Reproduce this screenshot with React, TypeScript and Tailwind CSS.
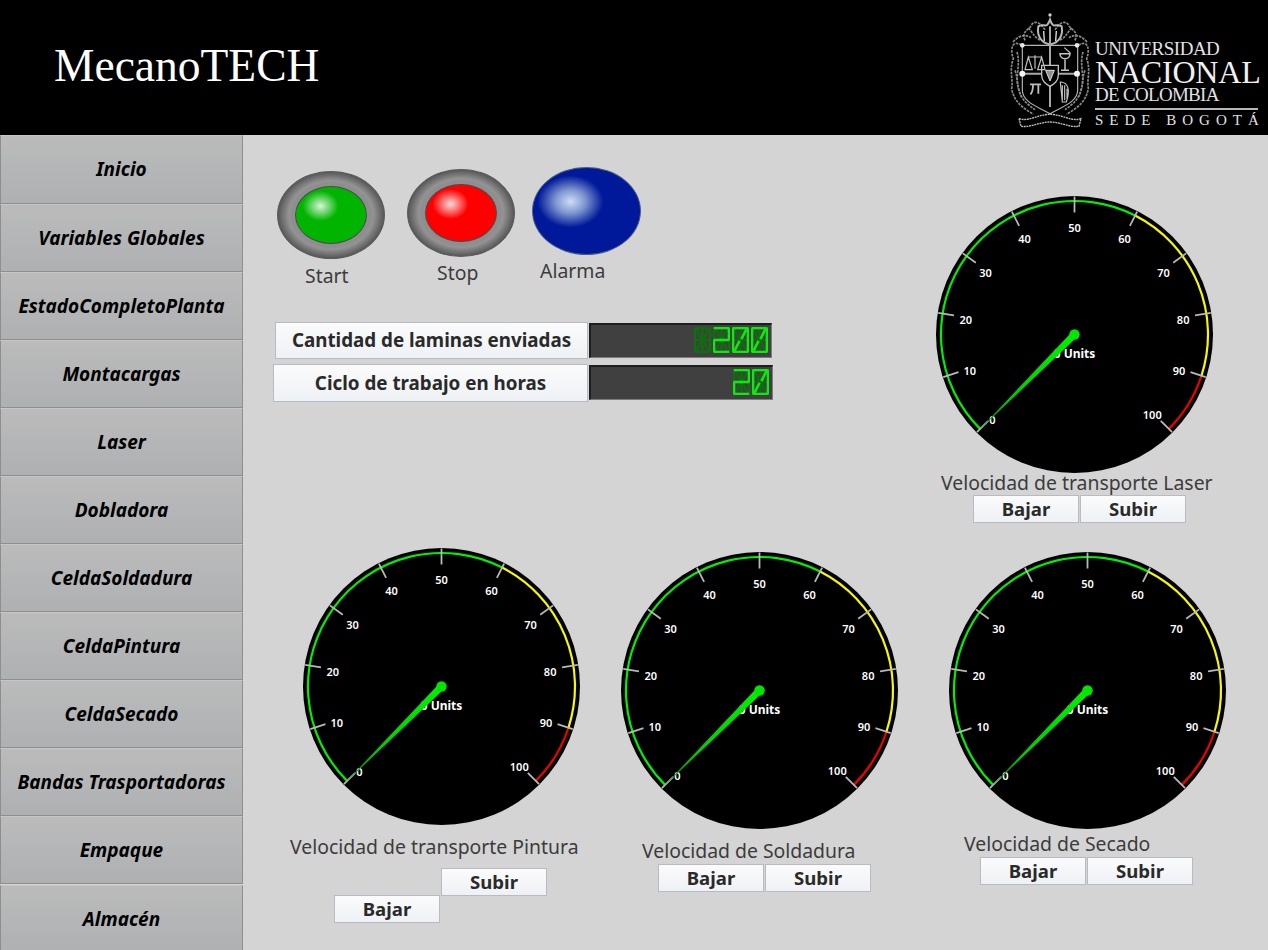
import React from 'react';

const menuItems = [
  'Inicio',
  'Variables Globales',
  'EstadoCompletoPlanta',
  'Montacargas',
  'Laser',
  'Dobladora',
  'CeldaSoldadura',
  'CeldaPintura',
  'CeldaSecado',
  'Bandas Trasportadoras',
  'Empaque',
];

// 14 segment shapes on a 17x26 cell
const segments: Record<string, [number, number, number, number]> = {
  a: [2, 1, 15, 1],
  b: [16, 2, 16, 12],
  c: [16, 14, 16, 24],
  d: [2, 25, 15, 25],
  e: [1, 14, 1, 24],
  f: [1, 2, 1, 12],
  g1: [2, 13, 8, 13],
  g2: [9, 13, 15, 13],
  h: [3, 3, 7, 11],
  i: [8.5, 3, 8.5, 11],
  j: [14, 3, 10, 11],
  k: [7, 15, 3, 23],
  l: [8.5, 15, 8.5, 23],
  m: [10, 15, 14, 23],
};

const digitOn: Record<string, string[]> = {
  '1': [],
  '2': ['a', 'b', 'g1', 'g2', 'e', 'd'],
  '0': ['a', 'b', 'c', 'd', 'e', 'f', 'j', 'k'],
};

function Digit({ char }: { char: string }) {
  const on = digitOn[char];
  const names = Object.keys(segments).sort((p, q) => Number(on.includes(p)) - Number(on.includes(q)));
  return (
    <svg width="17" height="26" viewBox="0 0 17 26" className="shrink-0">
      {names.map(name => {
        const [x1, y1, x2, y2] = segments[name];
        const lit = on.includes(name);
        return (
          <line
            key={name}
            x1={x1}
            y1={y1}
            x2={x2}
            y2={y2}
            stroke={lit ? '#0cec0c' : '#0a720a'}
            strokeWidth={lit ? 2.6 : 2}
            strokeLinecap="square"
          />
        );
      })}
    </svg>
  );
}

function Display({ value, className }: { value: string; className: string }) {
  return (
    <div
      className={`flex justify-end gap-[2px] bg-[#404040] border-t-2 border-l-2 border-r border-b border-t-[#1e1e1e] border-l-[#1e1e1e] border-r-[#7c7c7c] border-b-[#7c7c7c] pt-[2px] pr-[3px] ${className}`}
    >
      {value.split('').map((c, i) => (
        <Digit key={i} char={c} />
      ))}
    </div>
  );
}

function polar(r: number, value: number) {
  const a = ((-135 + 2.7 * value) * Math.PI) / 180;
  return { x: 138.5 + r * Math.sin(a), y: 138.5 - r * Math.cos(a) };
}

function arc(from: number, to: number, r: number) {
  const p1 = polar(r, from);
  const p2 = polar(r, to);
  const large = (to - from) * 2.7 > 180 ? 1 : 0;
  return `M${p1.x} ${p1.y}A${r} ${r} 0 ${large} 1 ${p2.x} ${p2.y}`;
}

function Gauge({ id }: { id: string }) {
  const ticks = [0, 10, 20, 30, 40, 50, 60, 70, 80, 90, 100];
  const tip = polar(136, 0);
  const mid = polar(70, 0);
  const nx = Math.SQRT1_2;
  return (
    <svg width="277" height="277" viewBox="0 0 277 277" className="block shrink-0">
      <defs>
        <linearGradient id={id} x1="138.5" y1="138.5" x2={tip.x} y2={tip.y} gradientUnits="userSpaceOnUse">
          <stop offset="0" stopColor="#00f000" />
          <stop offset="0.6" stopColor="#00d000" />
          <stop offset="1" stopColor="#108a10" />
        </linearGradient>
      </defs>
      <circle cx="138.5" cy="138.5" r="138.5" fill="#000" />
      <path d={arc(0, 60, 133.5)} fill="none" stroke="#00f000" strokeWidth="2.2" />
      <path d={arc(60, 90, 133.5)} fill="none" stroke="#f8f800" strokeWidth="2.2" />
      <path d={arc(90, 100, 133.5)} fill="none" stroke="#f00000" strokeWidth="2.2" />
      {ticks.map(v => {
        const a = polar(138, v);
        const b = polar(122, v);
        const t = polar(v === 0 ? 116 : 110, v);
        return (
          <g key={v}>
            <line x1={a.x} y1={a.y} x2={b.x} y2={b.y} stroke="#b8b8b8" strokeWidth="1.8" />
            <text x={t.x} y={t.y + 7} textAnchor="middle" className="fill-white text-[11px] font-semibold">
              {v}
            </text>
          </g>
        );
      })}
      <text x="138.5" y="162" textAnchor="middle" className="fill-white text-[12px] font-bold">
        0 Units
      </text>
      <polygon
        points={`${138.5 + 3.6 * nx},${138.5 + 3.6 * nx} ${mid.x + 1.9 * nx},${mid.y + 1.9 * nx} ${tip.x},${tip.y} ${mid.x - 1.9 * nx},${mid.y - 1.9 * nx} ${138.5 - 3.6 * nx},${138.5 - 3.6 * nx}`}
        fill={`url(#${id})`}
      />
      <circle cx="138.5" cy="138.5" r="5.2" fill="#00e600" />
    </svg>
  );
}

function ActionButton({ label, className = '' }: { label: string; className?: string }) {
  return (
    <button className={`w-[106px] h-[28px] shrink-0 flex items-center justify-center bg-gradient-to-b from-[#fbfbfb] to-[#eef1f5] border border-[#b8bcc2] text-[18.6px] leading-none font-bold text-[#2a2a2a] ${className}`}>
      {label}
    </button>
  );
}

function Title({ text, className }: { text: string; className: string }) {
  return <div className={`h-[24px] leading-[24px] text-[19.4px] text-[#3c3c3c] whitespace-nowrap ${className}`}>{text}</div>;
}

function Lamp({ label, kind, className, labelClass }: { label: string; kind: 'start' | 'stop' | 'alarm'; className: string; labelClass: string }) {
  return (
    <div className={`w-[108px] flex flex-col items-start ${className}`}>
      {kind === 'alarm' ? (
        <div className="w-[109px] h-[88px] rounded-[50%] border border-[#4a5a80] bg-[radial-gradient(ellipse_33px_26px_at_35%_39%,#cddcf6_0%,#7f97d0_45%,#00189a_100%)]" />
      ) : (
        <div className="w-[108px] h-[88px] rounded-[50%] border border-[#5a5a5a] flex items-center justify-center bg-[radial-gradient(closest-side,#8e8e8e_0%,#8e8e8e_74%,#939393_80%,#585858_100%)]">
          <div
            className={`w-[72px] h-[58px] rounded-[50%] border border-[#4a4a4a] ${
              kind === 'start'
                ? 'bg-[radial-gradient(ellipse_18px_15px_at_35%_34%,#d8f5d8_0%,#00b400_100%)]'
                : 'bg-[radial-gradient(ellipse_18px_15px_at_35%_34%,#ffdcdc_0%,#fe0000_100%)]'
            }`}
          />
        </div>
      )}
      <div className={`h-[24px] leading-[24px] text-[19.4px] text-[#3c3c3c] ${labelClass}`}>{label}</div>
    </div>
  );
}

function Crest() {
  // rough drawing of the university coat of arms
  return (
    <svg width="90" height="125" viewBox="0 0 270 375" className="shrink-0 blur-[0.5px]" fill="none" stroke="#c4c4c4">
      <g strokeWidth="5" stroke="#8a8a8a" strokeDasharray="8 3">
        <path d="M50 115C20 95 15 130 25 155C12 190 25 215 20 245C28 290 60 305 85 322" />
        <path d="M220 115C250 95 255 130 245 155C258 190 245 215 250 245C242 290 210 305 185 322" />
        <path d="M36 135C48 175 28 210 42 250C48 275 66 292 90 308" />
        <path d="M234 135C222 175 242 210 228 250C222 275 204 292 180 308" />
        <path d="M60 100C48 70 72 72 82 50C98 38 110 56 120 68" />
        <path d="M210 100C222 70 198 72 188 50C172 38 160 56 150 68" />
        <path d="M24 105C42 85 60 80 78 92" />
        <path d="M246 105C228 85 210 80 192 92" />
        <path d="M70 62C85 80 90 95 110 100" />
        <path d="M200 62C185 80 180 95 160 100" />
        <path d="M30 190C40 215 34 240 50 270" />
        <path d="M240 190C230 215 236 240 220 270" />
      </g>
      <path d="M100 58C95 85 108 108 135 112C162 108 175 85 170 58C152 46 146 70 135 38C124 70 118 46 100 58Z" strokeWidth="6" stroke="#b8b8b8" />
      <path d="M116 72L118 102M135 58L135 108M154 72L152 102" strokeWidth="4" stroke="#e4e4e4" />
      <circle cx="135" cy="24" r="5" fill="#d0d0d0" stroke="none" />
      <path d="M52 115H218V250C218 285 170 300 135 320C100 300 52 285 52 250Z" strokeWidth="3.5" stroke="#b4b4b4" />
      <path d="M135 60V300M52 200H218" strokeWidth="6" stroke="#a8a8a8" />
      <circle cx="52" cy="115" r="7" fill="#e8e8e8" stroke="none" />
      <circle cx="216" cy="115" r="7" fill="#e8e8e8" stroke="none" />
      <circle cx="52" cy="200" r="9" fill="#f4f4f4" stroke="none" />
      <circle cx="216" cy="200" r="9" fill="#f4f4f4" stroke="none" />
      <path d="M110 175H160V205C160 222 148 230 135 238C122 230 110 222 110 205Z" strokeWidth="4" fill="#000" stroke="#c0c0c0" />
      <path d="M122 190H148L135 222Z" strokeWidth="3" fill="#909090" stroke="#dcdcdc" />
      <path d="M90 145V185M70 150H110M70 150L60 188H82ZM110 150L98 188H120Z" strokeWidth="3.5" />
      <path d="M165 140C165 160 195 160 195 140ZM180 158V188M168 190H192" strokeWidth="4.5" />
      <path d="M178 122L196 138" strokeWidth="3.5" />
      <path d="M75 232H108M84 232C84 250 82 258 76 262M100 232V260" strokeWidth="5.5" stroke="#bcbcbc" />
      <path d="M166 225C190 225 196 250 184 285H172ZM172 235V278M179 235V280M186 245V275" strokeWidth="3.5" />
      <path d="M42 335C70 345 100 322 135 322C170 322 200 345 228 335L222 358C195 362 165 345 135 345C105 345 75 362 48 358Z" strokeWidth="4" strokeDasharray="6 2" stroke="#c0c0c0" />
    </svg>
  );
}

function Logo() {
  return (
    <div className="flex items-start mt-[7px] mr-[8px]">
      <Crest />
      <div className="flex flex-col font-['Liberation_Serif',serif] text-[#e2e2e2] w-[165px] pt-[32px] whitespace-nowrap">
        <div className="text-[19px] leading-[20px] tracking-[-0.5px]">UNIVERSIDAD</div>
        <div className="text-[32px] leading-[27px] tracking-[-0.2px] text-[#f0f0f0]">NACIONAL</div>
        <div className="text-[19px] leading-[18px] tracking-[-0.7px]">DE COLOMBIA</div>
        <div className="h-[2px] w-[163px] bg-[#b8b8b8] mt-[4px]" />
        <div className="text-[15px] leading-[15px] tracking-[6px] mt-[3px]">SEDE BOGOTÁ</div>
      </div>
    </div>
  );
}

export default function App() {
  return (
    <div className="w-[1268px] h-[950px] overflow-hidden flex flex-col bg-[#d4d4d4] font-['Noto_Sans',sans-serif]">
      {/* Header */}
      <div className="h-[135px] shrink-0 bg-black flex justify-between">
        <div className="ml-[54px] mt-[38px] text-[45.5px] leading-[56px] text-white font-['Liberation_Serif',serif]">MecanoTECH</div>
        <Logo />
      </div>

      <div className="flex flex-1 min-h-0">
        {/* Sidebar */}
        <div className="w-[243px] shrink-0 flex flex-col">
          {menuItems.map((item, i) => (
            <button
              key={item}
              className={`shrink-0 border border-[#8e8e8e] border-t-[#c6c6c6] bg-gradient-to-b from-[#bbbbbb] to-[#aeb0b2] text-[19px] font-bold italic text-black whitespace-nowrap ${
                i === 0 ? 'h-[69px]' : 'h-[68px]'
              }`}
            >
              {item}
            </button>
          ))}
          <button className="h-[69px] shrink-0 mt-px border border-[#8e8e8e] border-t-[#c6c6c6] bg-gradient-to-b from-[#bbbbbb] to-[#aeb0b2] text-[19px] font-bold italic text-black">
            Almacén
          </button>
        </div>

        {/* Panel */}
        <div className="flex-1 min-w-0 flex flex-col">
          <div className="flex h-[388px] shrink-0">
            <div className="w-[530px] shrink-0 pl-[30px]">
              <div className="flex items-start h-[153px]">
                <Lamp label="Start" kind="start" className="ml-[4px] mt-[36px]" labelClass="mt-[5px] ml-[28px]" />
                <Lamp label="Stop" kind="stop" className="ml-[22px] mt-[34px]" labelClass="mt-[4px] ml-[30px]" />
                <Lamp label="Alarma" kind="alarm" className="ml-[17px] mt-[32px]" labelClass="mt-[4px] ml-[8px]" />
              </div>
              <div className="mt-[34px] ml-[2px] flex items-start">
                <div className="w-[313px] h-[37px] flex items-center justify-center bg-gradient-to-b from-[#fbfbfb] to-[#eef1f5] border border-[#b8bcc2] text-[18.8px] font-bold text-[#2a2a2a]">
                  Cantidad de laminas enviadas
                </div>
                <Display value="1200" className="w-[183px] h-[35px] ml-px mt-px" />
              </div>
              <div className="mt-[5px] flex items-start">
                <div className="w-[315px] h-[38px] flex items-center justify-center bg-gradient-to-b from-[#fbfbfb] to-[#eef1f5] border border-[#b8bcc2] text-[18.8px] font-bold text-[#2a2a2a]">
                  Ciclo de trabajo en horas
                </div>
                <Display value="20" className="w-[184px] h-[35px] ml-px mt-px" />
              </div>
            </div>
            <div className="ml-[163px] mt-[61px] w-[277px] shrink-0 flex flex-col">
              <Gauge id="needle-laser" />
              <Title text="Velocidad de transporte Laser" className="-mt-[2px] ml-[5px]" />
              <div className="flex gap-px ml-[37px]">
                <ActionButton label="Bajar" />
                <ActionButton label="Subir" />
              </div>
            </div>
          </div>

          <div className="flex items-start pt-[25px]">
            <div className="ml-[60px] w-[277px] shrink-0 flex flex-col">
              <Gauge id="needle-pintura" />
              <Title text="Velocidad de transporte Pintura" className="mt-[10px] -ml-[13px]" />
              <div className="flex items-start gap-px ml-[31px] mt-[9px]">
                <ActionButton label="Bajar" className="mt-[27px]" />
                <ActionButton label="Subir" />
              </div>
            </div>
            <div className="ml-[41px] mt-[4px] w-[277px] shrink-0 flex flex-col">
              <Gauge id="needle-soldadura" />
              <Title text="Velocidad de Soldadura" className="mt-[10px] ml-[21px]" />
              <div className="flex gap-px ml-[37px] mt-px">
                <ActionButton label="Bajar" />
                <ActionButton label="Subir" />
              </div>
            </div>
            <div className="ml-[51px] mt-[4px] w-[277px] shrink-0 flex flex-col">
              <Gauge id="needle-secado" />
              <Title text="Velocidad de Secado" className="mt-[3px] ml-[15px]" />
              <div className="flex gap-px ml-[31px] mt-px">
                <ActionButton label="Bajar" />
                <ActionButton label="Subir" />
              </div>
            </div>
          </div>
        </div>
      </div>
    </div>
  );
}
